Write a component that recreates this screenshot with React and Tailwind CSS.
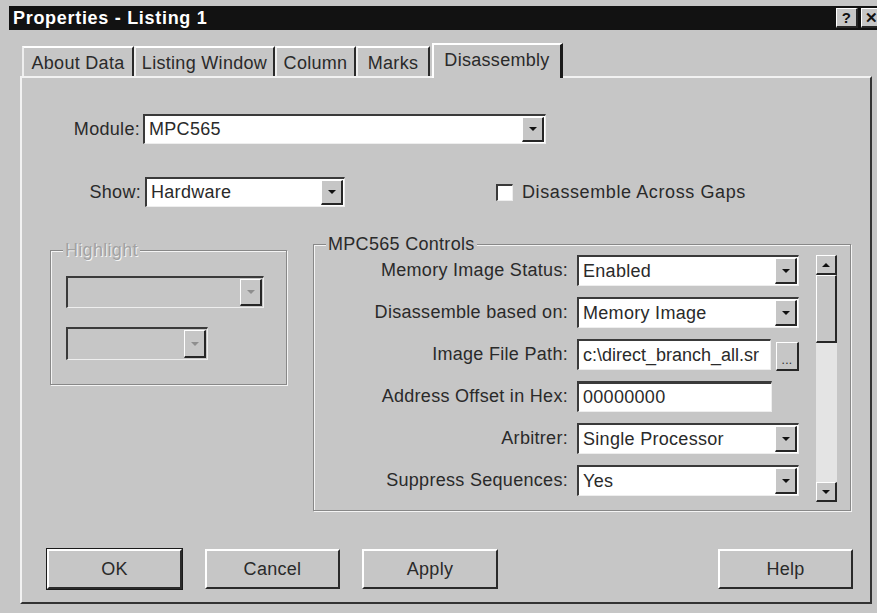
import React from 'react';

const Arrow = ({ dim, up }) => (
  <svg width="8" height="4" viewBox="0 0 8 4" className={up ? 'rotate-180' : ''}>
    <path d="M0 0h8L4 4z" fill={dim ? '#8e8e8e' : '#111'} />
  </svg>
);

const Raised = ({ className = '', children }) => (
  <div
    className={`flex items-center justify-center border-t border-l border-t-white border-l-white border-b-2 border-r-2 border-b-[#262626] border-r-[#262626] bg-[#c6c6c6] ${className}`}
  >
    {children}
  </div>
);

const Sunken = ({ className = '', dim, children }) => (
  <div
    className={`flex border-t-2 border-l-2 border-t-[#3a3a3a] border-l-[#3a3a3a] border-b border-r border-b-[#eeeeee] border-r-[#eeeeee] p-[1px] ${dim ? 'bg-[#c6c6c6]' : 'bg-white'} ${className}`}
  >
    {children}
  </div>
);

const Field = ({ value, className = '' }) => (
  <span className={`flex min-w-0 flex-1 items-center overflow-hidden whitespace-nowrap pl-[3px] ${className}`}>{value}</span>
);

const Combo = ({ value = '', dim, className = '' }) => (
  <Sunken dim={dim} className={className}>
    <Field value={value} />
    <Raised className="w-[22px] shrink-0">
      <Arrow dim={dim} />
    </Raised>
  </Sunken>
);

const TextBox = ({ value, className = '', textClass = '' }) => (
  <Sunken className={className}>
    <Field value={value} className={textClass} />
  </Sunken>
);

const Tab = ({ label, width, active }) =>
  active ? (
    <div
      className={`relative z-10 -mb-[2px] ml-[2px] flex h-[35px] justify-center border-t-2 border-l-2 border-t-white border-l-white border-r-[3px] border-r-[#1a1a1a] bg-[#c6c6c6] pt-[5px] leading-[20px] ${width}`}
    >
      {label}
    </div>
  ) : (
    <div
      className={`flex h-[30px] justify-center border-t-2 border-l-2 border-t-white border-l-[#eeeeee] border-r-2 border-r-[#2a2a2a] pt-[5px] leading-[20px] ${width}`}
    >
      {label}
    </div>
  );

const GroupBox = ({ title, dim, className = '', children }) => (
  <div
    className={`relative border border-[#888888] shadow-[inset_1px_1px_0_#f4f4f4,1px_1px_0_#f4f4f4] ${className}`}
  >
    <span
      className={`absolute -top-[11px] left-[12px] bg-[#c6c6c6] px-[2px] leading-[20px] ${dim ? 'text-[#a2a2a2] [text-shadow:1px_1px_0_#f4f4f4]' : ''}`}
    >
      {title}
    </span>
    {children}
  </div>
);

const Row = ({ label, children }) => (
  <div className="flex h-[31px] items-center">
    <span className="w-[255px] pr-[1px] text-right">{label}</span>
    <div className="ml-[8px] flex h-full">{children}</div>
  </div>
);

const Button = ({ label, isDefault, className = '' }) => (
  <div
    className={`flex h-[40px] w-[135px] items-center justify-center border-t-2 border-l-2 border-t-white border-l-white border-b-2 border-r-2 border-b-[#2a2a2a] border-r-[#2a2a2a] ${isDefault ? 'outline outline-1 outline-[#1a1a1a]' : ''} ${className}`}
  >
    {label}
  </div>
);

export default function App() {
  return (
    <div className="flex h-[613px] w-[877px] flex-col overflow-hidden bg-[#c6c6c6] font-['Liberation_Sans',Arial,sans-serif] text-[18px] tracking-[0.3px] text-[#2a2a2a]">
      {/* caption */}
      <div className="ml-[9px] mt-[6px] flex h-[24px] items-center bg-[#121212] pl-[4px]">
        <span className="text-[18px] font-bold tracking-[0.7px] text-white">Properties - Listing 1</span>
        <div className="-mr-[6px] ml-auto flex gap-[3px]">
          <Raised className="h-[20px] w-[22px] text-[15px] font-bold leading-none text-[#111]">?</Raised>
          <Raised className="h-[20px] w-[22px] text-[15px] font-bold leading-none text-[#111]">✕</Raised>
        </div>
      </div>

      {/* tabs */}
      <div className="ml-[22px] mt-[13px] flex h-[33px] items-end">
        <Tab label="About Data" width="w-[112px]" />
        <Tab label="Listing Window" width="w-[141px]" />
        <Tab label="Column" width="w-[81px]" />
        <Tab label="Marks" width="w-[74px]" />
        <Tab label="Disassembly" width="w-[131px]" active />
      </div>

      {/* page */}
      <div className="ml-[20px] flex h-[528px] w-[852px] flex-col border-t-2 border-l-2 border-t-[#f2f2f2] border-l-[#f2f2f2] border-b-2 border-r-2 border-b-[#333333] border-r-[#333333]">
        <div className="mt-[36px] flex items-center">
          <span className="w-[118px] text-right">Module:</span>
          <Combo value="MPC565" className="ml-[3px] h-[30px] w-[403px]" />
        </div>

        <div className="mt-[33px] flex items-center">
          <span className="w-[119px] text-right">Show:</span>
          <Combo value="Hardware" className="ml-[4px] h-[30px] w-[200px]" />
          <div className="ml-[151px] h-[17px] w-[17px] border-t-2 border-l-2 border-t-[#3a3a3a] border-l-[#3a3a3a] border-b border-r border-b-[#eeeeee] border-r-[#eeeeee] bg-white" />
          <span className="ml-[9px] tracking-[0.6px]">Disassemble Across Gaps</span>
        </div>

        <div className="ml-[28px] mt-[37px] flex items-start">
          <GroupBox title="Highlight" dim className="mt-[6px] h-[135px] w-[237px]">
            <div className="ml-[15px] mt-[25px] flex flex-col">
              <Combo dim className="h-[32px] w-[198px]" />
              <Combo dim className="mt-[19px] h-[33px] w-[142px]" />
            </div>
          </GroupBox>

          <GroupBox title="MPC565 Controls" className="ml-[26px] h-[267px] w-[538px]">
            <div className="mt-[10px] flex">
              <div className="flex flex-col gap-[11px]">
                <Row label="Memory Image Status:">
                  <Combo value="Enabled" className="w-[222px]" />
                </Row>
                <Row label="Disassemble based on:">
                  <Combo value="Memory Image" className="w-[222px]" />
                </Row>
                <Row label="Image File Path:">
                  <TextBox value="c:\direct_branch_all.sr" textClass="tracking-normal" className="w-[194px]" />
                  <Raised className="ml-[5px] mt-[3px] h-[29px] w-[23px] items-end pb-[3px] text-[12px] leading-none">...</Raised>
                </Row>
                <Row label="Address Offset in Hex:">
                  <TextBox value="00000000" className="w-[195px] border-t-[3px]" />
                </Row>
                <Row label="Arbitrer:">
                  <Combo value="Single Processor" className="w-[222px]" />
                </Row>
                <Row label="Suppress Sequences:">
                  <Combo value="Yes" className="w-[222px]" />
                </Row>
              </div>

              {/* vertical scroll bar */}
              <div className="ml-[17px] flex h-[247px] w-[21px] flex-col">
                <Raised className="h-[20px]">
                  <Arrow up />
                </Raised>
                <Raised className="h-[68px]" />
                <div className="flex-1 bg-[#e4e4e4]" />
                <Raised className="h-[20px]">
                  <Arrow />
                </Raised>
              </div>
            </div>
          </GroupBox>
        </div>

        <div className="mt-[38px] flex">
          <Button label="OK" isDefault className="ml-[25px]" />
          <Button label="Cancel" className="ml-[23px]" />
          <Button label="Apply" className="ml-[22px] w-[136px]" />
          <Button label="Help" className="ml-auto mr-[17px]" />
        </div>
      </div>
    </div>
  );
}
